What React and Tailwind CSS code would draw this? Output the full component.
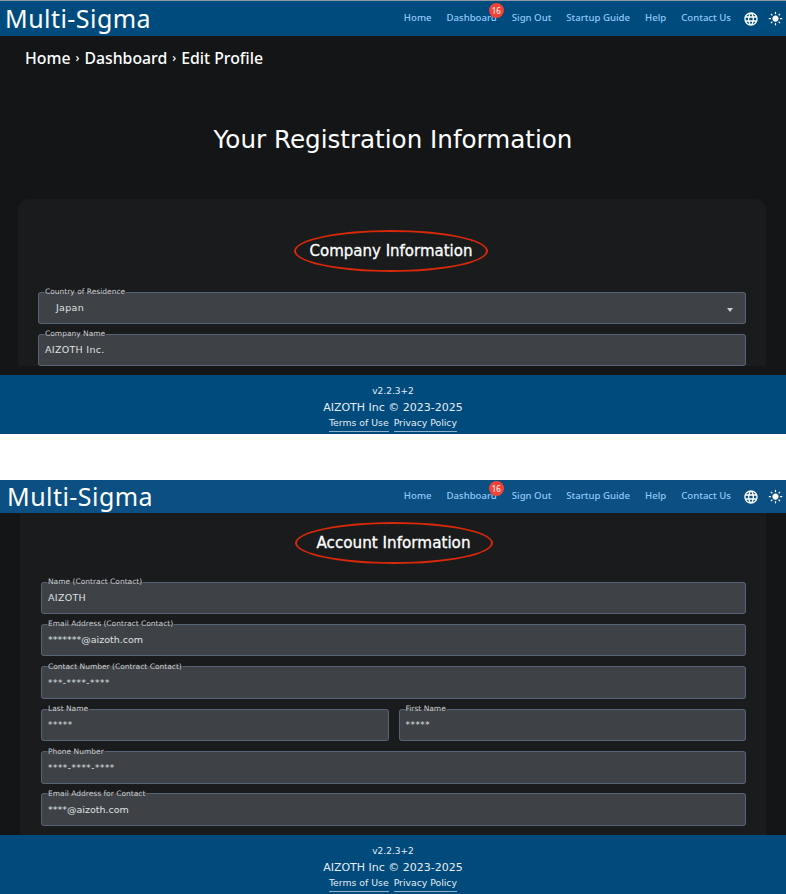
const GlobeIcon = () => (
  <svg viewBox="0 0 24 24" className="w-[16px] h-[16px] fill-white">
    <path d="M11.99 2C6.47 2 2 6.48 2 12s4.47 10 9.99 10C17.52 22 22 17.52 22 12S17.52 2 11.99 2zm6.93 6h-2.95c-.32-1.25-.78-2.45-1.38-3.56 1.84.63 3.37 1.91 4.33 3.56zM12 4.04c.83 1.2 1.48 2.53 1.91 3.96h-3.82c.43-1.43 1.08-2.76 1.91-3.96zM4.26 14C4.1 13.36 4 12.69 4 12s.1-1.36.26-2h3.38c-.08.66-.14 1.32-.14 2 0 .68.06 1.34.14 2H4.26zm.82 2h2.95c.32 1.25.78 2.45 1.38 3.56-1.84-.63-3.37-1.9-4.33-3.56zm2.95-8H5.08c.96-1.66 2.49-2.93 4.33-3.56C8.81 5.55 8.35 6.75 8.03 8zM12 19.96c-.83-1.2-1.48-2.53-1.91-3.96h3.82c-.43 1.43-1.08 2.76-1.91 3.96zM14.34 14H9.66c-.09-.66-.16-1.32-.16-2 0-.68.07-1.35.16-2h4.68c.09.65.16 1.32.16 2 0 .68-.07 1.34-.16 2zm.25 5.56c.6-1.11 1.06-2.31 1.38-3.56h2.95c-.96 1.65-2.49 2.93-4.33 3.56zM16.36 14c.08-.66.14-1.32.14-2 0-.68-.06-1.34-.14-2h3.38c.16.64.26 1.31.26 2s-.1 1.36-.26 2h-3.38z" />
  </svg>
);

const SunIcon = () => (
  <svg viewBox="0 0 24 24" className="w-[15px] h-[15px] fill-white">
    <path d="M12 7c-2.76 0-5 2.24-5 5s2.24 5 5 5 5-2.24 5-5-2.24-5-5-5zM2 13h2c.55 0 1-.45 1-1s-.45-1-1-1H2c-.55 0-1 .45-1 1s.45 1 1 1zm18 0h2c.55 0 1-.45 1-1s-.45-1-1-1h-2c-.55 0-1 .45-1 1s.45 1 1 1zM11 2v2c0 .55.45 1 1 1s1-.45 1-1V2c0-.55-.45-1-1-1s-1 .45-1 1zm0 18v2c0 .55.45 1 1 1s1-.45 1-1v-2c0-.55-.45-1-1-1s-1 .45-1 1zM5.99 4.58c-.39-.39-1.03-.39-1.41 0-.39.39-.39 1.03 0 1.41l1.06 1.06c.39.39 1.03.39 1.41 0s.39-1.03 0-1.41L5.99 4.58zm12.37 12.37c-.39-.39-1.03-.39-1.41 0-.39.39-.39 1.03 0 1.41l1.06 1.06c.39.39 1.03.39 1.41 0 .39-.39.39-1.03 0-1.41l-1.06-1.06zm1.06-10.96c.39-.39.39-1.03 0-1.41-.39-.39-1.03-.39-1.41 0l-1.06 1.06c-.39.39-.39 1.03 0 1.41s1.03.39 1.41 0l1.06-1.06zM7.05 18.36c.39-.39.39-1.03 0-1.41-.39-.39-1.03-.39-1.41 0l-1.06 1.06c-.39.39-.39 1.03 0 1.41s1.03.39 1.41 0l1.06-1.06z" />
  </svg>
);

const Header = ({ second }) => (
  <header
    className={
      second
        ? "h-[33px] shrink-0 flex items-center justify-between pl-[7px] pr-[3px] bg-[#0c4f82]"
        : "h-[36px] shrink-0 flex items-center justify-between pl-[5px] pr-[3px] bg-[#004b7d] border-t border-[#8b9aa6]"
    }
  >
    <div className="font-['Noto_Sans',sans-serif] text-[25px] leading-none text-white tracking-[0.45px]">Multi-Sigma</div>
    <nav className="flex items-center text-[9.6px] font-['Noto_Sans',sans-serif] font-medium text-[#90caf9]">
      <a className="mr-[15px]">Home</a>
      <a className="relative mr-[15px]">
        Dashboard
        <span className="absolute -top-[8px] -right-[7px] w-[15px] h-[15px] rounded-full bg-[#f44336] text-white text-[8px] font-normal flex items-center justify-center">
          16
        </span>
      </a>
      <a className="mr-[15px]">Sign Out</a>
      <a className="mr-[15px]">Startup Guide</a>
      <a className="mr-[15px]">Help</a>
      <a className="mr-[12px]">Contact Us</a>
      <span className="mr-[9px]"><GlobeIcon /></span>
      <SunIcon />
    </nav>
  </header>
);

const Footer = ({ second }) => (
  <footer
    className={
      (second ? "bg-[#004a7c]" : "bg-[#004b7d]") +
      " h-[59px] shrink-0 flex flex-col items-center pt-[10px] text-[#e6edf2] font-['DejaVu_Sans',sans-serif]"
    }
  >
    <div className="text-[9px] leading-[12px]">v2.2.3+2</div>
    <div className="text-[11px] leading-[18px] mt-[2px]">AIZOTH Inc © 2023-2025</div>
    <div className="flex gap-[5px] text-[9.3px] leading-[14px] -mt-[1px]">
      <a className="border-b border-[#8fb0c8] pb-[1px]">Terms of Use</a>
      <a className="border-b border-[#8fb0c8] pb-[1px]">Privacy Policy</a>
    </div>
  </footer>
);

const Field = ({ label, value, select, stars, email, className }) => (
  <fieldset className={"relative h-[36px] border-[1.5px] border-[#566478] rounded-[3px] bg-[#3e4145] px-[6px] font-['DejaVu_Sans',sans-serif] " + (className || "")}>
    <legend className="-ml-[1px] text-[7.5px] leading-[8px] text-[#c9ccd0] px-[1px]">{label}</legend>
    <div
      className={
        (select ? "pl-[11px] " : "") +
        (stars ? "text-[8.7px] tracking-[0.6px] " : "text-[9.5px] ") +
        (email ? "tracking-[0px] " : stars ? "" : "tracking-[0.3px] ") +
        "pt-[3px] leading-[18px] text-[#dfe1e3]"
      }
    >
      {value}
    </div>
    {select && (
      <span className="absolute right-[12px] top-[12px] w-0 h-0 border-x-[3.5px] border-x-transparent border-t-[4px] border-t-[#c9ccd0]" />
    )}
  </fieldset>
);

const SectionTitle = ({ children, wide }) => (
  <div className="flex justify-center">
    <h2
      className={
        (wide ? "w-[198px] text-[15.2px]" : "w-[194px] text-[15px]") +
        " relative h-[42px] flex items-center justify-center text-white font-['DejaVu_Sans',sans-serif] [-webkit-text-stroke:0.3px_white]"
      }
    >
      {children}
      <span className="absolute inset-0 rounded-[50%] border-2 border-[#d9290a]" />
    </h2>
  </div>
);

export default function App() {
  return (
    <div className="w-[786px] h-[894px] bg-white overflow-hidden">
      <section className="h-[434px] flex flex-col bg-[#141517]">
        <Header />
        <main className="flex-1 min-h-0 overflow-hidden">
          <div className="pl-[25px] pt-[11px] flex items-center text-[15.8px] leading-[22px] font-medium text-white font-['Noto_Sans',sans-serif]">
            Home <span className="mx-[5px] text-[12px]">›</span> Dashboard <span className="mx-[5px] text-[12px]">›</span> Edit Profile
          </div>
          <h1 className="mt-[53px] text-center text-[24.6px] leading-[36px] text-white font-['DejaVu_Sans',sans-serif]">
            Your Registration Information
          </h1>
          <div className="mt-[41px] ml-[18px] mr-[20px] rounded-t-[10px] bg-[#191b1d] px-[20px] pt-[31px]">
            <div className="pr-[2px]">
              <SectionTitle>Company Information</SectionTitle>
            </div>
            <div className="mt-[16px] flex flex-col gap-[6px]">
              <Field label="Country of Residence" value="Japan" select />
              <Field label="Company Name" value="AIZOTH Inc." />
            </div>
          </div>
        </main>
        <Footer />
      </section>

      <div className="h-[46px]" />

      <section className="h-[414px] flex flex-col bg-[#141517]">
        <Header second />
        <main className="flex-1 min-h-0 overflow-hidden">
          <div className="mx-[20px] h-full bg-[#191b1d] pl-[21px] pr-[20px] pt-[9px]">
            <SectionTitle wide>Account Information</SectionTitle>
            <div className="mt-[14px] flex flex-col gap-[6.4px]">
              <Field label="Name (Contract Contact)" value="AIZOTH" />
              <Field label="Email Address (Contract Contact)" value="*******@aizoth.com" email />
              <Field label="Contact Number (Contract Contact)" value="***-****-****" stars />
              <div className="flex gap-[10px]">
                <Field label="Last Name" value="*****" stars className="flex-1" />
                <Field label="First Name" value="*****" stars className="flex-1" />
              </div>
              <Field label="Phone Number" value="****-****-****" stars />
              <Field label="Email Address for Contact" value="****@aizoth.com" email />
            </div>
          </div>
        </main>
        <Footer second />
      </section>
    </div>
  );
}
